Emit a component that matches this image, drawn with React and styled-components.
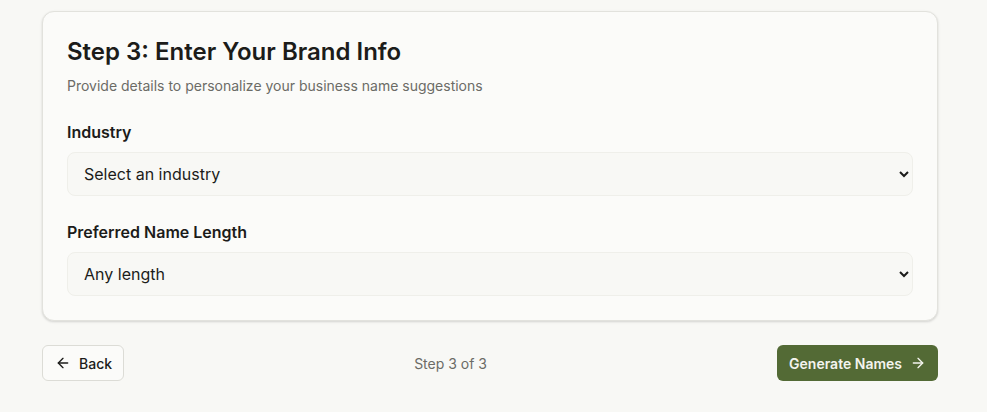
import React, { useState } from "react";
import styled, { createGlobalStyle } from "styled-components";
import { ArrowLeft, ArrowRight } from "lucide-react";

const GlobalStyle = createGlobalStyle`
  html, body {
    margin: 0;
    background: #f8f8f5;
    font-family: Inter, "Noto Sans", sans-serif;
    color: #1c1c1a;
  }
`;

const industries = ["Technology", "Food & Beverage", "Fashion", "Health & Wellness", "Finance"];
const lengths = ["Any length", "Short (1-6 letters)", "Medium (7-10 letters)", "Long (11+ letters)"];

export default function App() {
  const [industry, setIndustry] = useState("");
  const [length, setLength] = useState("any");

  return (
    <>
      <GlobalStyle />
      <Page>
        <Card>
          <Title>Step 3: Enter Your Brand Info</Title>
          <Subtitle>Provide details to personalize your business name suggestions</Subtitle>
          <Fields>
            <Field>
              <Label htmlFor="industry">Industry</Label>
              <Select id="industry" value={industry} onChange={(e) => setIndustry(e.target.value)}>
                <option value="">Select an industry</option>
                {industries.map((i) => (
                  <option key={i} value={i}>{i}</option>
                ))}
              </Select>
            </Field>
            <Field>
              <Label htmlFor="length">Preferred Name Length</Label>
              <Select id="length" value={length} onChange={(e) => setLength(e.target.value)}>
                {lengths.map((l, idx) => (
                  <option key={l} value={idx === 0 ? "any" : l}>{l}</option>
                ))}
              </Select>
            </Field>
          </Fields>
        </Card>
        <Footer>
          <BackButton>
            <ArrowLeft size={16} strokeWidth={2} />
            Back
          </BackButton>
          <StepText>Step 3 of 3</StepText>
          <PrimaryButton>
            Generate Names
            <ArrowRight size={16} strokeWidth={2} />
          </PrimaryButton>
        </Footer>
      </Page>
    </>
  );
}

const Page = styled.div`
  width: 896px;
  margin-left: 42px;
  padding-top: 11px;
  display: flex;
  flex-direction: column;
  gap: 24px;
`;

const Card = styled.div`
  background: #fbfbf9;
  border: 1px solid #e2e2dd;
  border-radius: 12px;
  box-shadow: 0 1px 3px rgba(0, 0, 0, 0.1), 0 1px 2px rgba(0, 0, 0, 0.06);
  padding: 24px;
`;

const Title = styled.h2`
  margin: 0;
  font-size: 24px;
  line-height: 32px;
  font-weight: 600;
  color: #1c1c1a;
`;

const Subtitle = styled.p`
  margin: 8px 0 0;
  font-size: 14px;
  line-height: 20px;
  color: #6b6b66;
`;

const Fields = styled.div`
  margin-top: 24px;
  display: flex;
  flex-direction: column;
  gap: 24px;
`;

const Field = styled.div`
  display: flex;
  flex-direction: column;
  gap: 8px;
`;

const Label = styled.label`
  font-size: 16px;
  line-height: 24px;
  font-weight: 600;
  color: #1c1c1a;
`;

const Select = styled.select`
  height: 44px;
  padding: 0 8px 0 12px;
  font-family: Inter, "Noto Sans", sans-serif;
  font-size: 16px;
  color: #1c1c1a;
  background: #f8f8f5;
  border: 1px solid #efefea;
  border-radius: 8px;
  outline: none;
`;

const Footer = styled.div`
  display: flex;
  align-items: center;
  justify-content: space-between;
`;

const BackButton = styled.button`
  display: flex;
  align-items: center;
  gap: 8px;
  height: 36px;
  padding: 0 11px 0 12px;
  font-family: Inter, "Noto Sans", sans-serif;
  font-size: 14px;
  font-weight: 500;
  color: #1c1c1a;
  background: #fbfbf9;
  border: 1px solid #dcdcd6;
  border-radius: 6px;
  cursor: pointer;
`;

const StepText = styled.span`
  font-size: 14px;
  color: #6b6b66;
`;

const PrimaryButton = styled.button`
  display: flex;
  align-items: center;
  gap: 8px;
  height: 36px;
  padding: 0 12px;
  font-family: Inter, "Noto Sans", sans-serif;
  font-size: 14px;
  font-weight: 600;
  color: #f4f4ee;
  background: #536a35;
  border: none;
  border-radius: 6px;
  cursor: pointer;
`;
